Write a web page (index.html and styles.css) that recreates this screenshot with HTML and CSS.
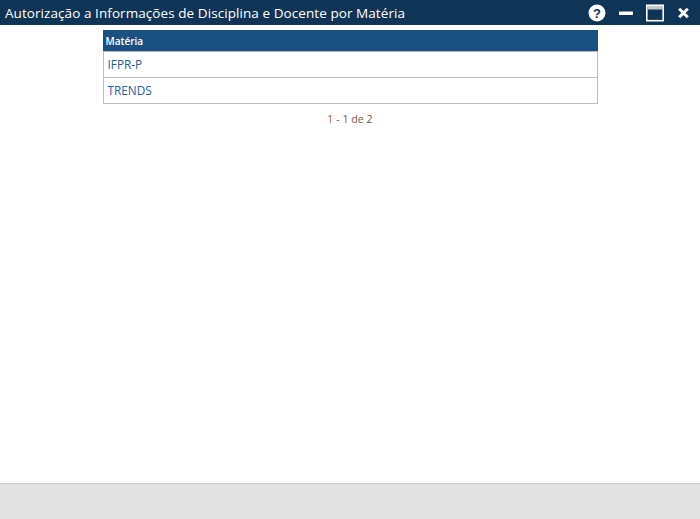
FILE: index.html
```html
<!DOCTYPE html>
<html lang="pt">
<head>
<meta charset="utf-8">
<title>Autorização a Informações de Disciplina e Docente por Matéria</title>
<link rel="stylesheet" href="styles.css">
</head>
<body>
<div class="window">
  <header class="titlebar">
    <h1 class="title">Autorização a Informações de Disciplina e Docente por Matéria</h1>
    <div class="controls">
      <svg class="icon" width="18" height="18" viewBox="0 0 18 18"><circle cx="9" cy="9" r="8.5" fill="#fff"/><text x="9" y="13.5" text-anchor="middle" class="help-q">?</text></svg>
      <svg class="icon" width="14" height="18" viewBox="0 0 14 18"><rect x="0" y="7.5" width="14" height="3.5" rx="0.5" fill="#fff"/></svg>
      <svg class="icon" width="19" height="18" viewBox="0 0 19 18"><rect x="0.8" y="1.3" width="16.4" height="15.4" fill="none" stroke="#fff" stroke-width="1.6"/><rect x="1.5" y="2" width="15" height="3.5" fill="#c4c9cf"/></svg>
      <svg class="icon" width="12" height="18" viewBox="0 0 12 18"><path d="M1.2 4.7 L9.8 13.3 M9.8 4.7 L1.2 13.3" stroke="#fff" stroke-width="3" fill="none"/></svg>
    </div>
  </header>
  <main class="content">
    <table class="grid">
      <thead><tr><th>Matéria</th></tr></thead>
      <tbody>
        <tr><td>IFPR-P</td></tr>
        <tr><td>TRENDS</td></tr>
      </tbody>
    </table>
    <p class="pager">1 - 1 de 2</p>
  </main>
  <footer class="footer"></footer>
</div>
</body>
</html>
```
FILE: styles.css
```css
* { box-sizing: border-box; }
html, body { margin: 0; height: 100%; }
body { font-family: "Open Sans", "Noto Sans", "Liberation Sans", sans-serif; background: #fff; }
.window { display: flex; flex-direction: column; height: 519px; overflow: hidden; }
.titlebar {
  flex: none; height: 25px; background: #0f3456; color: #fff;
  display: flex; align-items: center; justify-content: space-between;
  padding: 0 10px 0 5px;
}
.title { margin: 0; font-size: 13.5px; font-weight: 400; white-space: nowrap; letter-spacing: 0.07px; }
.controls { display: flex; align-items: center; gap: 13px; }
.icon { display: block; }
.help-q { font-family: "Liberation Sans", sans-serif; font-size: 13px; font-weight: 700; fill: #0f3456; }
.content { flex: 1; padding-top: 5px; }
.grid { width: 495px; margin: 0 auto; border-collapse: collapse; font-size: 11.8px; }
.grid th {
  height: 21px; padding: 0 2px 1px; background: #1b5082; color: #fff;
  text-align: left; font-size: 10px; font-weight: 600;
  border: 1px solid #1b5082; border-bottom: 1px solid #b4c0c4;
}
.grid td { height: 26px; padding: 0 4px 1px; color: #1b609f; border: 1px solid #b4c0c4; background: #fff; }
.pager { margin: 8px 0 0; text-align: center; font-size: 10.7px; line-height: 15px; color: #7a5a3a; }
.footer { flex: none; height: 36px; background: #e2e2e2; border-top: 1px solid #cfcfcf; }
```
